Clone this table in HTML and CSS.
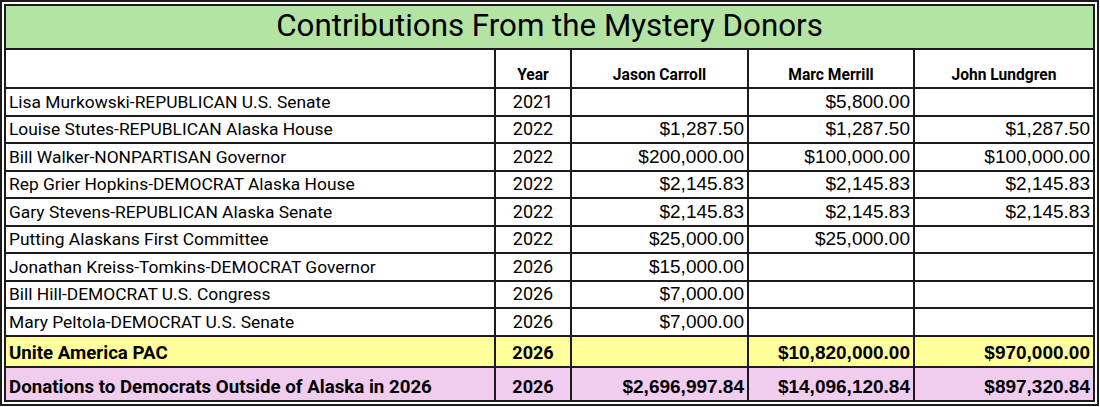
FILE: index.html
```html
<!DOCTYPE html>
<html lang="en">
<head>
<meta charset="utf-8">
<title>Contributions From the Mystery Donors</title>
<link rel="stylesheet" href="styles.css">
</head>
<body>
<div class="frame">
  <div class="sheet">
    <div class="title">Contributions From the Mystery Donors</div>

    <div class="cell head"></div>
    <div class="cell head center">Year</div>
    <div class="cell head center">Jason Carroll</div>
    <div class="cell head center">Marc Merrill</div>
    <div class="cell head center last">John Lundgren</div>

    <div class="cell label">Lisa Murkowski-REPUBLICAN U.S. Senate</div>
    <div class="cell year">2021</div>
    <div class="cell amt"></div>
    <div class="cell amt">$5,800.00</div>
    <div class="cell amt last"></div>

    <div class="cell label">Louise Stutes-REPUBLICAN Alaska House</div>
    <div class="cell year">2022</div>
    <div class="cell amt">$1,287.50</div>
    <div class="cell amt">$1,287.50</div>
    <div class="cell amt last">$1,287.50</div>

    <div class="cell label">Bill Walker-NONPARTISAN Governor</div>
    <div class="cell year">2022</div>
    <div class="cell amt">$200,000.00</div>
    <div class="cell amt">$100,000.00</div>
    <div class="cell amt last">$100,000.00</div>

    <div class="cell label">Rep Grier Hopkins-DEMOCRAT Alaska House</div>
    <div class="cell year">2022</div>
    <div class="cell amt">$2,145.83</div>
    <div class="cell amt">$2,145.83</div>
    <div class="cell amt last">$2,145.83</div>

    <div class="cell label">Gary Stevens-REPUBLICAN Alaska Senate</div>
    <div class="cell year">2022</div>
    <div class="cell amt">$2,145.83</div>
    <div class="cell amt">$2,145.83</div>
    <div class="cell amt last">$2,145.83</div>

    <div class="cell label">Putting Alaskans First Committee</div>
    <div class="cell year">2022</div>
    <div class="cell amt">$25,000.00</div>
    <div class="cell amt">$25,000.00</div>
    <div class="cell amt last"></div>

    <div class="cell label">Jonathan Kreiss-Tomkins-DEMOCRAT Governor</div>
    <div class="cell year">2026</div>
    <div class="cell amt">$15,000.00</div>
    <div class="cell amt"></div>
    <div class="cell amt last"></div>

    <div class="cell label">Bill Hill-DEMOCRAT U.S. Congress</div>
    <div class="cell year">2026</div>
    <div class="cell amt">$7,000.00</div>
    <div class="cell amt"></div>
    <div class="cell amt last"></div>

    <div class="cell label">Mary Peltola-DEMOCRAT U.S. Senate</div>
    <div class="cell year">2026</div>
    <div class="cell amt">$7,000.00</div>
    <div class="cell amt"></div>
    <div class="cell amt last"></div>

    <div class="cell label bold yellow">Unite America PAC</div>
    <div class="cell year bold yellow">2026</div>
    <div class="cell amt bold yellow"></div>
    <div class="cell amt bold yellow">$10,820,000.00</div>
    <div class="cell amt bold yellow last">$970,000.00</div>

    <div class="cell label bold pink bottom">Donations to Democrats Outside of Alaska in 2026</div>
    <div class="cell year bold pink bottom">2026</div>
    <div class="cell amt bold pink bottom">$2,696,997.84</div>
    <div class="cell amt bold pink bottom">$14,096,120.84</div>
    <div class="cell amt bold pink bottom last">$897,320.84</div>
  </div>
</div>
</body>
</html>
```

FILE: styles.css
```css
html, body {
  margin: 0;
  padding: 0;
  background: #ffffff;
}

.frame {
  box-sizing: border-box;
  width: 1099px;
  height: 406px;
  border: 6px double #1c1c1c;
  background: #ffffff;
}

.sheet {
  display: grid;
  grid-template-columns: 490px 76px 177px 166px 178px;
  grid-template-rows: 44px 39px repeat(9, 27.56px) 31px 32px;
  font-family: Roboto, "Liberation Sans", sans-serif;
  color: #000;
}

.title {
  grid-column: 1 / -1;
  box-sizing: border-box;
  background: #b4e4a3;
  border-bottom: 2px solid #1c1c1c;
  font-family: Roboto, "Liberation Sans", sans-serif;
  font-size: 31.3px;
  display: flex;
  align-items: center;
  justify-content: center;
  padding-bottom: 3px;
}

.cell {
  box-sizing: border-box;
  border-right: 2px solid #1c1c1c;
  border-bottom: 2px solid #1c1c1c;
  display: flex;
  align-items: flex-end;
  padding: 0 3px 3px 3px;
  font-size: 18px;
  line-height: 20px;
  white-space: nowrap;
  overflow: hidden;
}

.cell.last {
  border-right: none;
}

.cell.bottom {
  border-bottom: none;
}

.head {
  font-weight: 700;
  font-size: 15.6px;
  padding-bottom: 2px;
}

.center {
  justify-content: center;
}

.label {
  justify-content: flex-start;
  font-size: 17.4px;
}

.label.bold {
  font-size: 18.7px;
}

.year {
  justify-content: center;
}

.amt {
  justify-content: flex-end;
  font-family: "Liberation Sans", Arial, sans-serif;
  font-size: 19px;
}

.bold {
  font-weight: 700;
}

.yellow {
  background: #ffff9c;
}

.pink {
  background: #f0cdef;
}
```
